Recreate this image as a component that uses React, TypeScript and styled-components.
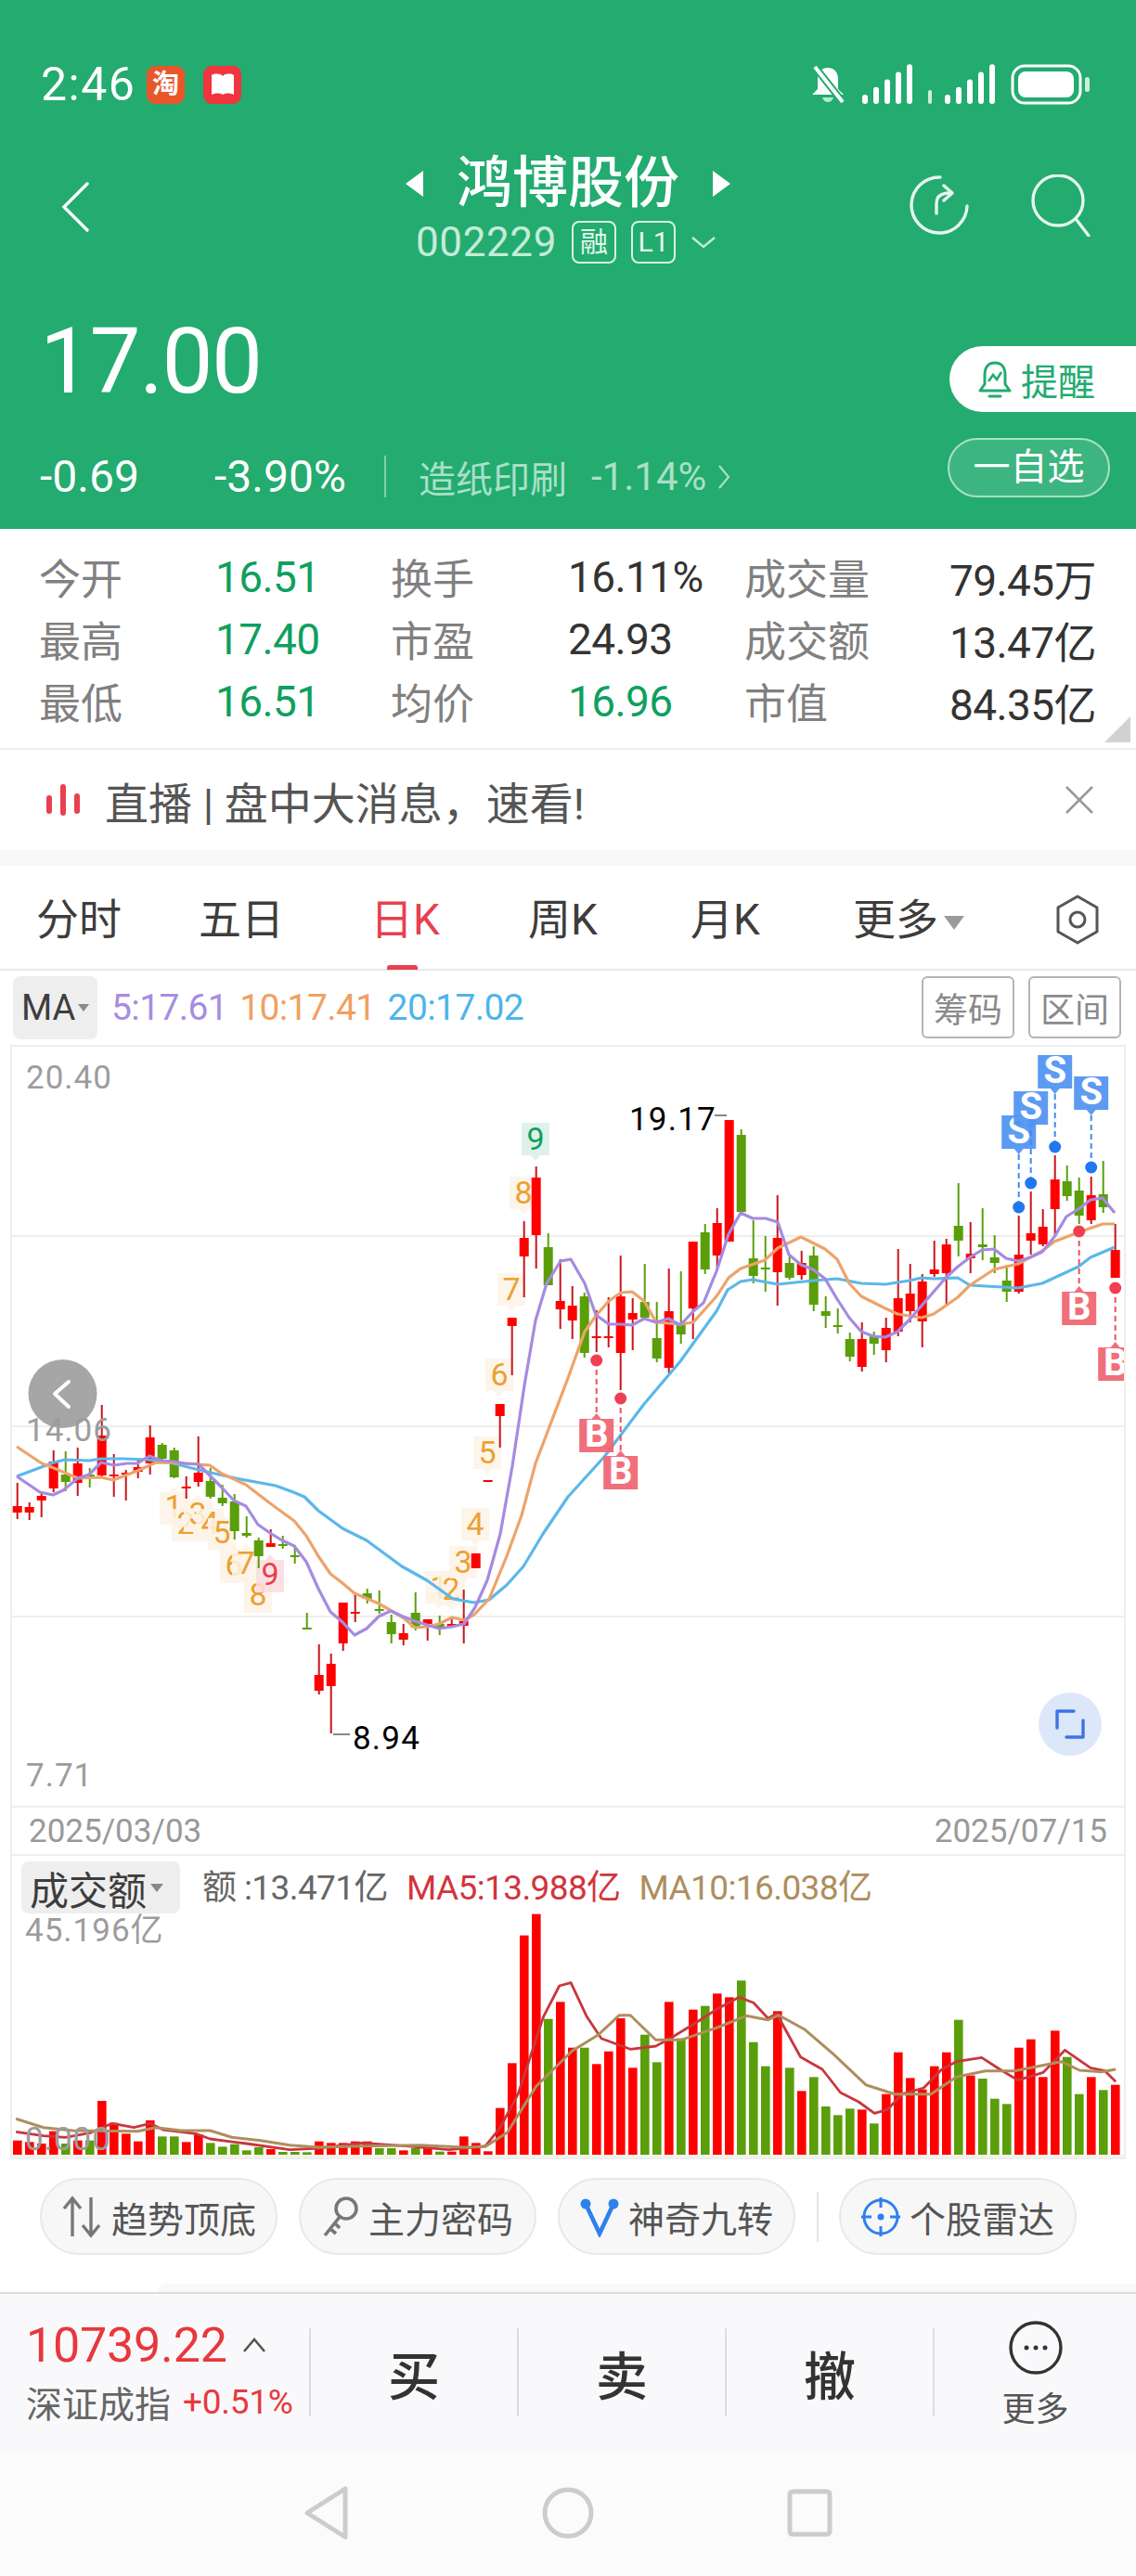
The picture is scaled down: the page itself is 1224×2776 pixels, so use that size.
import React from "react";
import styled, { createGlobalStyle } from "styled-components";

const GREEN = "#23ab70";
const RED = "#e8404f";

const Global = createGlobalStyle`
  html, body { margin: 0; padding: 0; background: #fff; }
  body { font-family: Roboto, "Noto Sans CJK SC", sans-serif; }
`;

const Page = styled.div`
  width: 1224px;
  height: 2776px;
  overflow: hidden;
  display: flex;
  flex-direction: column;
  background: #fff;
`;

/* ---------- green header ---------- */
const Header = styled.header`
  height: 570px;
  flex: none;
  background: ${GREEN};
  color: #fff;
`;
const StatusBar = styled.div`
  display: flex;
  align-items: center;
  justify-content: space-between;
  height: 44px;
  padding: 69px 49px 0 44px;
`;
const StatusLeft = styled.div`
  display: flex;
  align-items: center;
`;
const Time = styled.span`
  font-size: 50px;
  line-height: 44px;
  width: 114px;
  letter-spacing: 1.5px;
`;
const AppIcon = styled.div<{ $bg: string }>`
  width: 41px;
  height: 41px;
  margin-right: 20px;
  border-radius: 9px;
  background: ${(p) => p.$bg};
  display: flex;
  align-items: center;
  justify-content: center;
  font-size: 29px;
  font-weight: 700;
  line-height: 1;
`;
const StatusRight = styled.div`
  display: flex;
  align-items: center;
  gap: 17px;
`;
const NavBar = styled.div`
  display: grid;
  grid-template-columns: 1fr auto 1fr;
  padding: 54px 66px 0 66px;
`;
const BackSlot = styled.div`
  padding-top: 29px;
`;
const NavIcons = styled.div`
  display: flex;
  justify-content: flex-end;
  gap: 64px;
  padding-top: 21px;
  margin-right: -17px;
`;
const TitleBlock = styled.div`
  display: flex;
  flex-direction: column;
  align-items: center;
`;
const TitleRow = styled.div`
  display: flex;
  align-items: center;
  gap: 35px;
  height: 62px;
`;
const Title = styled.h1`
  margin: 0;
  font-size: 60px;
  line-height: 62px;
  font-weight: 500;
`;
const CodeRow = styled.div`
  display: flex;
  align-items: center;
  height: 46px;
  margin-top: 9px;
  margin-left: -4px;
  color: #c4ecd9;
`;
const Code = styled.span`
  font-size: 44px;
  letter-spacing: 0.6px;
  margin-right: 16px;
`;
const CodeBadge = styled.span`
  box-sizing: border-box;
  width: 48px;
  height: 46px;
  margin-right: 16px;
  border: 2px solid #d8f3e6;
  border-radius: 8px;
  display: flex;
  align-items: center;
  justify-content: center;
  font-size: 30px;
  line-height: 1;
  color: #e4f8ee;
`;
const Quote = styled.div`
  display: flex;
  justify-content: space-between;
  padding-top: 56px;
`;
const QuoteLeft = styled.div`
  padding-left: 46px;
`;
const Price = styled.div`
  font-size: 98px;
  line-height: 100px;
  margin-left: -3px;
  letter-spacing: -1.5px;
`;
const ChangeRow = styled.div`
  display: flex;
  align-items: center;
  height: 45px;
  margin-top: 51px;
  font-size: 48px;
`;
const ChangeValue = styled.span<{ $w: number }>`
  width: ${(p) => p.$w}px;
  margin-left: -3px;
`;
const ChangeDivider = styled.span`
  width: 2px;
  height: 45px;
  margin: 0 35px 0 0;
  background: #7fd0ab;
`;
const SectorName = styled.span`
  font-size: 40px;
  color: #a9e0c6;
  margin-right: 26px;
`;
const SectorValue = styled.span`
  font-size: 42px;
  color: #a9e0c6;
  margin-right: 12px;
`;
const QuoteRight = styled.div`
  display: flex;
  flex-direction: column;
  align-items: flex-end;
  padding-top: 33px;
`;
const AlertButton = styled.div`
  box-sizing: border-box;
  width: 201px;
  height: 71px;
  padding-left: 31px;
  gap: 10px;
  display: flex;
  align-items: center;
  background: #fff;
  border-radius: 36px 0 0 36px;
  color: ${GREEN};
  font-size: 40px;
`;
const WatchButton = styled.div`
  box-sizing: border-box;
  width: 175px;
  height: 64px;
  margin: 28px 28px 0 0;
  display: flex;
  align-items: center;
  justify-content: center;
  border: 2px solid #a9e0c6;
  border-radius: 32px;
  background: rgba(255, 255, 255, 0.12);
  font-size: 40px;
  line-height: 1;
`;

/* ---------- stats ---------- */
const Stats = styled.section`
  position: relative;
  height: 238px;
  flex: none;
  box-sizing: border-box;
  padding: 18px 43px 0 42px;
  display: grid;
  grid-template-columns: 190px 189px 191px 190px 190px 1fr;
  grid-auto-rows: 67px;
  align-items: center;
  border-bottom: 2px solid #eee;
`;
const StatLabel = styled.span`
  font-size: 45px;
  color: #808080;
`;
const StatValue = styled.span<{ $green?: boolean; $right?: boolean }>`
  font-size: 46px;
  letter-spacing: -0.6px;
  color: ${(p) => (p.$green ? "#0f9f5f" : "#333")};
  text-align: ${(p) => (p.$right ? "right" : "left")};
  white-space: nowrap;
`;
const Corner = styled.span`
  position: absolute;
  right: 6px;
  bottom: 6px;
  width: 0;
  height: 0;
  border-left: 28px solid transparent;
  border-bottom: 28px solid #d2d2d2;
`;

/* ---------- notice ---------- */
const Notice = styled.div`
  height: 108px;
  flex: none;
  display: flex;
  align-items: center;
  padding: 0 45px 0 50px;
  gap: 27px;
  color: #555;
  font-size: 47px;
`;
const NoticeText = styled.span`
  flex: 1;
`;
const GreyStrip = styled.div`
  height: 17px;
  flex: none;
  background: #f8f8f8;
`;

/* ---------- period tabs ---------- */
const Tabs = styled.nav`
  height: 113px;
  flex: none;
  box-sizing: border-box;
  display: flex;
  align-items: center;
  padding: 5px 39px 0 39px;
  border-bottom: 2px solid #e8e8e8;
`;
const Tab = styled.span<{ $w: number; $active?: boolean }>`
  position: relative;
  width: ${(p) => p.$w}px;
  flex: none;
  font-size: 46px;
  line-height: 60px;
  color: ${(p) => (p.$active ? RED : "#3d3d3d")};
`;
const TabMark = styled.i`
  position: absolute;
  left: 18px;
  top: 79px;
  width: 33px;
  height: 5px;
  border-radius: 3px 3px 0 0;
  background: ${RED};
`;
const Caret = styled.i<{ $s: number; $c: string }>`
  display: inline-block;
  margin-left: ${(p) => p.$s / 2}px;
  vertical-align: middle;
  border-left: ${(p) => p.$s}px solid transparent;
  border-right: ${(p) => p.$s}px solid transparent;
  border-top: ${(p) => p.$s * 1.4}px solid ${(p) => p.$c};
`;
const TabsEnd = styled.div`
  margin-left: auto;
  display: flex;
`;

/* ---------- indicator row ---------- */
const MaRow = styled.div`
  height: 80px;
  flex: none;
  box-sizing: border-box;
  display: flex;
  align-items: flex-start;
  padding: 6px 16px 0 14px;
`;
const Chip = styled.div<{ $w: number; $h: number; $size: number }>`
  box-sizing: border-box;
  width: ${(p) => p.$w}px;
  height: ${(p) => p.$h}px;
  flex: none;
  padding-left: 9px;
  display: flex;
  align-items: center;
  background: #eee;
  border-radius: 8px;
  color: #3d3d3d;
  font-size: ${(p) => p.$size}px;
`;
const MaValues = styled.div`
  flex: 1;
  display: flex;
  gap: 13px;
  height: 68px;
  align-items: center;
  padding-left: 15px;
`;
const Ma = styled.span<{ $c: string }>`
  font-size: 39px;
  letter-spacing: -0.6px;
  color: ${(p) => p.$c};
`;
const OutlineBtn = styled.div`
  box-sizing: border-box;
  width: 100px;
  height: 67px;
  margin-left: 15px;
  display: flex;
  align-items: center;
  justify-content: center;
  border: 2px solid #b4b4b4;
  border-radius: 6px;
  color: #8a8a8a;
  font-size: 37px;
`;

/* ---------- k-line ---------- */
const ChartFrame = styled.div`
  width: 1202px;
  margin-left: 11px;
  box-sizing: border-box;
  flex: none;
  border: 2px solid #eee;
  font-size: 0;
`;
const ChartSvg = styled.svg`
  display: block;
`;
const AxisText = styled.text`
  font-family: Roboto, "Noto Sans CJK SC", sans-serif;
  font-size: 35px;
  letter-spacing: 1px;
  fill: #9c9c9c;
`;
const ExtremeText = styled.text`
  font-family: Roboto, sans-serif;
  font-size: 35px;
  letter-spacing: 1.2px;
  fill: #000;
`;
const TagText = styled.text<{ $bold?: boolean }>`
  font-family: Roboto, sans-serif;
  font-size: ${(p) => (p.$bold ? 40 : 34)}px;
  font-weight: ${(p) => (p.$bold ? 700 : 400)};
  text-anchor: middle;
`;

const DateRow = styled.div`
  width: 1202px;
  height: 52px;
  margin-left: 11px;
  box-sizing: border-box;
  flex: none;
  display: flex;
  align-items: center;
  justify-content: space-between;
  padding: 0 18px;
  border: solid #eee;
  border-width: 0 2px 2px;
  font-size: 35px;
  color: #999;
`;
const Volume = styled.div`
  width: 1202px;
  margin-left: 11px;
  box-sizing: border-box;
  flex: none;
  border: solid #eee;
  border-width: 0 2px 2px;
`;
const VolumeHead = styled.div`
  height: 62px;
  box-sizing: border-box;
  display: flex;
  align-items: flex-start;
  padding: 6px 0 0 10px;
`;
const VolumeValues = styled.div`
  display: flex;
  align-items: center;
  gap: 20px;
  height: 50px;
  padding-left: 24px;
`;
const VolumeValue = styled.span<{ $c: string }>`
  font-size: 37px;
  letter-spacing: -0.6px;
  color: ${(p) => p.$c};
`;

/* ---------- shortcut pills ---------- */
const Pills = styled.div`
  display: flex;
  align-items: center;
  padding: 20px 0 0 43px;
  gap: 23px;
  flex: none;
`;
const Pill = styled.div`
  box-sizing: border-box;
  width: 256px;
  height: 83px;
  display: flex;
  align-items: center;
  justify-content: center;
  gap: 10px;
  background: #f7f7f7;
  border: 2px solid #e8e8e8;
  border-radius: 42px;
  font-size: 39px;
  color: #555;
`;
const PillDivider = styled.span`
  width: 2px;
  height: 54px;
  background: #e4e4e4;
  margin-right: -1px;
`;
const TradeGap = styled.div`
  height: 42px;
  flex: none;
  box-sizing: border-box;
  padding: 31px 0 0 170px;
  border-bottom: 2px solid #ddd;
`;
const FaintPanel = styled.div`
  height: 9px;
  background: #f9f9f9;
  border-radius: 9px 0 0 0;
`;

/* ---------- trade bar ---------- */
const TradeBar = styled.div`
  height: 170px;
  flex: none;
  display: grid;
  grid-template-columns: 333px 224px 224px 224px 219px;
  align-items: start;
  padding-top: 37px;
  box-sizing: border-box;
  background: #f9f9fb;
`;
const IndexBlock = styled.div`
  padding-left: 28px;
`;
const IndexTop = styled.div`
  display: flex;
  align-items: center;
  height: 44px;
  margin-top: -4px;
  font-size: 52px;
  color: #e8383d;
  gap: 16px;
  letter-spacing: -0.2px;
`;
const IndexBottom = styled.div`
  display: flex;
  align-items: center;
  height: 48px;
  margin-top: 15px;
`;
const IndexName = styled.span`
  font-size: 39px;
  color: #666;
  margin-right: 13px;
`;
const IndexPct = styled.span`
  font-size: 37px;
  color: #e8383d;
  letter-spacing: -0.3px;
`;
const TradeCell = styled.div`
  height: 95px;
  box-sizing: border-box;
  display: flex;
  align-items: center;
  justify-content: center;
  border-left: 2px solid #ddd;
  font-size: 56px;
  font-weight: 500;
  color: #333;
`;
const MoreCell = styled.div`
  height: 95px;
  box-sizing: border-box;
  border-left: 2px solid #ddd;
  display: flex;
  flex-direction: column;
  align-items: center;
  font-size: 36px;
  color: #555;
`;
const MoreIcon = styled.svg`
  flex: none;
  margin-top: -8px;
`;
const MoreText = styled.span`
  line-height: 36px;
  margin-top: 20px;
`;
const SystemNav = styled.div`
  flex: 1;
  display: flex;
  justify-content: center;
  gap: 200px;
  padding-top: 36px;
  background: #fbfbfb;
`;

/* ---------- chart data ---------- */
type Candle = [number, number, number, number, "r" | "g"];

const CANDLES: Candle[] = [
  [1598, 1623, 1630, 1637, "r"], [1619, 1624, 1630, 1638, "r"], [1608, 1612, 1617, 1635, "r"], [1563, 1575, 1604, 1608, "r"],
  [1564, 1589, 1597, 1607, "g"], [1560, 1577, 1598, 1612, "r"], [1582, 1589, 1591, 1603, "g"], [1514, 1547, 1590, 1592, "r"],
  [1567, 1589, 1591, 1613, "r"], [1584, 1587, 1589, 1617, "r"], [1573, 1581, 1586, 1593, "r"], [1536, 1549, 1577, 1589, "r"],
  [1555, 1557, 1572, 1573, "g"], [1560, 1563, 1592, 1593, "g"], [1591, 1602, 1604, 1615, "r"], [1548, 1587, 1597, 1602, "r"],
  [1582, 1596, 1613, 1615, "g"], [1600, 1614, 1620, 1623, "g"], [1610, 1618, 1650, 1659, "g"], [1634, 1652, 1655, 1657, "g"],
  [1657, 1660, 1677, 1690, "g"], [1648, 1663, 1667, 1667, "r"], [1655, 1664, 1666, 1669, "g"], [1665, 1676, 1678, 1685, "g"],
  [1738, 1754, 1756, 1756, "g"], [1772, 1805, 1822, 1826, "r"], [1782, 1793, 1817, 1868, "r"], [1727, 1727, 1771, 1779, "r"],
  [1717, 1737, 1739, 1748, "r"], [1712, 1717, 1723, 1728, "g"], [1714, 1734, 1736, 1739, "g"], [1740, 1748, 1761, 1771, "g"],
  [1750, 1760, 1767, 1773, "r"], [1716, 1738, 1754, 1757, "g"], [1745, 1745, 1750, 1768, "r"], [1741, 1750, 1755, 1762, "g"],
  [1743, 1750, 1753, 1753, "r"], [1713, 1747, 1752, 1771, "r"], [1674, 1674, 1690, 1690, "r"], [1595, 1595, 1597, 1597, "r"],
  [1513, 1513, 1526, 1560, "r"], [1420, 1420, 1429, 1482, "r"], [1316, 1334, 1354, 1398, "r"], [1257, 1269, 1331, 1367, "r"],
  [1329, 1344, 1385, 1385, "g"], [1357, 1402, 1411, 1432, "r"], [1386, 1407, 1423, 1443, "r"], [1393, 1397, 1458, 1463, "g"],
  [1412, 1440, 1442, 1457, "r"], [1398, 1440, 1442, 1452, "r"], [1353, 1397, 1458, 1498, "r"], [1399, 1415, 1422, 1455, "r"],
  [1362, 1403, 1420, 1423, "g"], [1403, 1442, 1464, 1468, "g"], [1367, 1413, 1474, 1480, "r"], [1370, 1427, 1438, 1448, "g"],
  [1338, 1338, 1410, 1443, "r"], [1319, 1328, 1368, 1373, "g"], [1302, 1318, 1353, 1368, "r"], [1207, 1207, 1338, 1338, "r"],
  [1217, 1223, 1306, 1306, "g"], [1315, 1356, 1375, 1383, "g"], [1332, 1366, 1368, 1392, "g"], [1288, 1334, 1371, 1407, "r"],
  [1354, 1361, 1377, 1379, "g"], [1348, 1361, 1374, 1379, "r"], [1343, 1353, 1406, 1413, "g"], [1397, 1413, 1418, 1431, "g"],
  [1410, 1428, 1430, 1437, "g"], [1436, 1443, 1462, 1467, "g"], [1425, 1443, 1473, 1478, "r"], [1435, 1440, 1448, 1460, "g"],
  [1420, 1431, 1455, 1468, "r"], [1346, 1399, 1435, 1440, "r"], [1362, 1394, 1413, 1425, "r"], [1373, 1381, 1424, 1452, "r"],
  [1337, 1368, 1373, 1376, "r"], [1335, 1341, 1372, 1407, "r"], [1275, 1321, 1337, 1354, "g"], [1317, 1351, 1356, 1372, "r"],
  [1302, 1341, 1344, 1358, "g"], [1331, 1355, 1361, 1372, "g"], [1363, 1380, 1392, 1403, "g"], [1310, 1352, 1392, 1394, "r"],
  [1284, 1329, 1337, 1352, "r"], [1303, 1322, 1341, 1343, "r"], [1245, 1271, 1303, 1333, "r"], [1256, 1273, 1289, 1294, "g"],
  [1269, 1283, 1310, 1319, "g"], [1268, 1288, 1315, 1319, "r"], [1251, 1287, 1301, 1307, "g"], [1319, 1347, 1377, 1377, "r"],
];

const MA5 =
  "18,1591 43,1608 57,1611 68,1606 84,1593 96,1589 109,1576 123,1579 137,1577 148,1577 161,1569 174,1574 187,1575 199,1577 214,1578 226,1590 239,1603 252,1617 265,1623 278,1643 291,1652 304,1660 317,1666 330,1683 343,1712 356,1737 369,1748 382,1762 395,1755 408,1742 421,1736 434,1742 447,1747 460,1751 473,1755 487,1753 500,1750 512,1732 525,1703 539,1653 552,1580 565,1493 577,1423 589,1383 604,1359 615,1357 630,1383 642,1417 656,1427 669,1427 681,1428 694,1421 707,1425 720,1421 733,1428 747,1413 758,1404 772,1370 785,1330 798,1307 811,1313 825,1313 838,1317 850,1352 863,1363 876,1368 889,1378 902,1400 915,1420 928,1435 941,1440 954,1441 967,1435 980,1422 993,1407 1006,1392 1019,1377 1032,1365 1045,1355 1058,1347 1071,1346 1084,1356 1097,1359 1110,1355 1123,1349 1136,1333 1149,1311 1162,1303 1175,1293 1188,1291 1201,1307";
const MA10 =
  "18,1559 45,1577 58,1582 84,1593 109,1592 122,1595 148,1585 168,1576 199,1577 226,1579 239,1588 265,1600 291,1620 317,1639 330,1655 343,1677 356,1696 369,1706 382,1717 408,1728 434,1743 447,1754 460,1753 473,1750 487,1743 500,1746 511,1740 527,1723 546,1677 562,1633 577,1577 612,1485 630,1435 642,1418 656,1402 669,1393 681,1392 694,1402 707,1425 733,1427 747,1425 772,1397 785,1377 798,1367 824,1358 838,1345 863,1333 889,1346 902,1357 915,1383 928,1397 954,1410 967,1416 993,1420 1006,1416 1032,1398 1045,1385 1071,1368 1097,1362 1123,1348 1136,1338 1162,1328 1188,1319 1201,1319";
const MA20 =
  "18,1591 58,1576 70,1573 96,1574 109,1572 133,1572 160,1573 187,1577 218,1585 254,1593 297,1601 316,1608 328,1613 343,1628 369,1647 395,1660 433,1688 460,1703 488,1723 511,1727 527,1724 546,1708 564,1688 585,1653 612,1613 651,1570 694,1513 733,1467 772,1413 784,1390 798,1381 811,1379 838,1384 876,1380 902,1378 928,1383 954,1384 980,1380 993,1377 1006,1378 1032,1377 1045,1385 1080,1387 1097,1388 1123,1383 1162,1365 1175,1355 1201,1344";

const NINE_UP = [
  { x: 473, y: 1693, n: "1" }, { x: 486, y: 1695, n: "2" }, { x: 499, y: 1666, n: "3" }, { x: 512, y: 1625, n: "4" },
  { x: 525, y: 1548, n: "5" }, { x: 538, y: 1464, n: "6" }, { x: 551, y: 1372, n: "7" }, { x: 564, y: 1268, n: "8" },
];
const NINE_DOWN = [
  { x: 187, y: 1602, n: "1" }, { x: 200, y: 1620, n: "2" }, { x: 213, y: 1610, n: "3" }, { x: 226, y: 1620, n: "4" },
  { x: 239, y: 1630, n: "5" }, { x: 252, y: 1665, n: "6" }, { x: 265, y: 1663, n: "7" }, { x: 278, y: 1697, n: "8" },
];
const SELLS = [
  { x: 1097.7, y: 1202, dot: 1301 }, { x: 1110.7, y: 1176, dot: 1275 }, { x: 1136.7, y: 1137, dot: 1236 }, { x: 1175.7, y: 1160, dot: 1258 },
];
const BUYS = [
  { x: 642.7, y: 1523, dot: 1466 }, { x: 668.7, y: 1563, dot: 1507 }, { x: 1162.7, y: 1386, dot: 1327 }, { x: 1201.7, y: 1446, dot: 1388 },
];

/* tops of the volume bars, read off the picture (3x vertical), colour by sign */
const VOLS: [number, "r" | "g"][] = [
  [1100, "r"], [1105, "r"], [1110, "r"], [1070, "r"], [1110, "g"], [1100, "r"], [1100, "g"], [972, "r"], [1043, "r"], [1078, "r"],
  [1103, "r"], [1035, "r"], [1087, "g"], [1087, "g"], [1105, "r"], [1080, "r"], [1108, "g"], [1120, "g"], [1112, "g"], [1132, "g"],
  [1122, "g"], [1128, "r"], [1137, "g"], [1137, "g"], [1138, "g"], [1103, "r"], [1108, "r"], [1108, "r"], [1103, "r"], [1103, "r"],
  [1125, "g"], [1125, "g"], [1132, "r"], [1125, "g"], [1120, "r"], [1136, "g"], [1136, "r"], [1087, "r"], [1108, "r"], [1135, "r"],
  [995, "r"], [850, "r"], [437, "r"], [368, "r"], [707, "g"], [652, "r"], [800, "r"], [800, "g"], [853, "r"], [812, "r"],
  [705, "r"], [865, "r"], [758, "g"], [847, "g"], [652, "r"], [770, "g"], [677, "r"], [665, "g"], [625, "r"], [637, "r"],
  [583, "g"], [782, "g"], [860, "g"], [682, "r"], [865, "g"], [940, "r"], [895, "g"], [990, "g"], [1018, "g"], [997, "g"],
  [1000, "r"], [1045, "g"], [950, "r"], [815, "r"], [898, "r"], [935, "r"], [860, "r"], [815, "r"], [710, "g"], [890, "r"],
  [900, "g"], [965, "g"], [982, "g"], [800, "r"], [773, "r"], [895, "r"], [745, "r"], [830, "g"], [950, "g"], [895, "r"],
  [937, "g"], [920, "r"],
];
const VOL_MA5: [number, number][] = [
  [22, 1072], [60, 1085], [90, 1090], [125, 1075], [155, 1045], [185, 1058], [207, 1045], [225, 1065], [270, 1078], [290, 1095], [340, 1110], [400, 1130], [440, 1125], [500, 1108], [560, 1118], [620, 1130], [670, 1118], [690, 1060], [715, 950], [750, 700], [772, 600], [788, 590], [810, 700], [830, 770], [870, 805], [905, 795], [925, 770], [960, 720], [990, 675], [1020, 637], [1040, 655], [1060, 705], [1072, 690], [1105, 830], [1135, 870], [1160, 945], [1185, 975], [1207, 1012], [1225, 1000], [1245, 950], [1275, 930], [1300, 870], [1320, 845], [1355, 832], [1380, 870], [1405, 905], [1440, 880], [1470, 808], [1505, 865], [1525, 875], [1540, 910],
];
const VOL_MA10: [number, number][] = [
  [22, 1030], [60, 1058], [100, 1068], [190, 1070], [215, 1058], [250, 1068], [290, 1068], [320, 1090], [360, 1100], [400, 1115], [440, 1122], [500, 1118], [580, 1115], [640, 1122], [670, 1120], [700, 1075], [740, 925], [790, 810], [825, 760], [855, 695], [870, 695], [905, 775], [940, 775], [990, 735], [1030, 697], [1060, 710], [1075, 695], [1110, 740], [1150, 820], [1195, 920], [1235, 950], [1285, 950], [1320, 895], [1360, 875], [1400, 875], [1465, 845], [1490, 873], [1520, 878], [1540, 870],
];
const volPoints = (p: [number, number][]) =>
  p.map(([x, y]) => `${(x / 1.281).toFixed(1)},${(1940 + y / 3).toFixed(1)}`).join(" ");

/* ---------- small drawings ---------- */
const tagPath = (cx: number, y: number, w: number, h: number, up: boolean) => {
  const side = w / 2 - 5;
  return up
    ? `M${cx - w / 2} ${y + h}h${w}v${-(h - 6)}h${-side}l-5-6-5 6h${-side}z`
    : `M${cx - w / 2} ${y}h${w}v${h - 6}h${-side}l-5 6-5-6h${-side}z`;
};

function NineTag(props: { x: number; y: number; n: string; up?: boolean; bg: string; fg: string }) {
  const { x, y, n, up, bg, fg } = props;
  return (
    <g>
      <path d={tagPath(x, y, 30, 41, !!up)} fill={bg} fillOpacity={0.86} />
      <TagText x={x} y={y + (up ? 33 : 29)} fill={fg}>
        {n}
      </TagText>
    </g>
  );
}

function SignalTag(props: { x: number; y: number; n: string; up?: boolean; bg: string }) {
  const { x, y, n, up, bg } = props;
  return (
    <g>
      <path d={tagPath(x, y, 37, 42, !!up)} fill={bg} fillOpacity={0.92} />
      <TagText $bold x={x} y={y + (up ? 36 : 30)} fill="#fff">
        {n}
      </TagText>
    </g>
  );
}

function KLine() {
  return (
    <ChartSvg width="1198" height="818" viewBox="13 1128 1198 818">
      {[1332, 1537, 1742].map((y) => (
        <line key={y} x1="13" x2="1211" y1={y} y2={y} stroke="#eee" strokeWidth="2" />
      ))}
      {NINE_UP.map((t) => (
        <NineTag key={t.x} {...t} bg="#fdf3e7" fg="#eca033" />
      ))}
      {NINE_DOWN.map((t) => (
        <NineTag key={t.x} {...t} up bg="#fdf3e7" fg="#eca033" />
      ))}
      <NineTag x={291} y={1675} n="9" up bg="#fbdcdf" fg="#e8404f" />
      <NineTag x={577} y={1210} n="9" bg="#d9f0e6" fg="#0f9f5f" />
      {CANDLES.map(([wt, bt, bb, wb, c], i) => {
        const x = 18.7 + 13 * i;
        const body = c === "r" ? "#ff0000" : "#5a9e0a";
        const wick = c === "r" ? "#c8141c" : "#5a9e0a";
        return (
          <g key={i}>
            <line x1={x} x2={x} y1={wt} y2={wb} stroke={wick} strokeWidth="2" />
            <rect x={x - 5} y={bt} width="10" height={bb - bt} fill={body} />
          </g>
        );
      })}
      <polyline points={MA20} fill="none" stroke="#5bb8e8" strokeWidth="3.2" strokeLinejoin="round" />
      <polyline points={MA10} fill="none" stroke="#eda36b" strokeWidth="3.2" strokeLinejoin="round" />
      <polyline points={MA5} fill="none" stroke="#a58be0" strokeWidth="3.2" strokeLinejoin="round" />
      {SELLS.map((s) => (
        <g key={s.x}>
          <line x1={s.x} x2={s.x} y1={s.y + 42} y2={s.dot} stroke="#3d8bf0" strokeWidth="2" strokeDasharray="6 4" />
          <circle cx={s.x} cy={s.dot} r="6.5" fill="#1f78f0" />
          <SignalTag x={s.x} y={s.y} n="S" bg="#4f93f2" />
        </g>
      ))}
      {BUYS.map((b) => (
        <g key={b.x}>
          <line x1={b.x} x2={b.x} y1={b.dot} y2={b.y} stroke="#ef4f5f" strokeWidth="2" strokeDasharray="6 4" />
          <circle cx={b.x} cy={b.dot} r="6.5" fill="#ef3f50" />
          <SignalTag x={b.x} y={b.y} n="B" up bg="#f0636f" />
        </g>
      ))}
      <line x1="770" x2="783" y1="1202" y2="1202" stroke="#888" strokeWidth="2" />
      <ExtremeText x="678" y="1218">19.17</ExtremeText>
      <line x1="359" x2="377" y1="1869" y2="1869" stroke="#888" strokeWidth="2" />
      <ExtremeText x="380" y="1885">8.94</ExtremeText>
      <circle cx="67.5" cy="1502" r="37" fill="#a6a6a6" />
      <path d="M74 1489l-15 13 15 14" fill="none" stroke="#fff" strokeWidth="4" strokeLinecap="round" strokeLinejoin="round" />
      <AxisText x="28" y="1173">20.40</AxisText>
      <AxisText x="28" y="1553">14.06</AxisText>
      <AxisText x="28" y="1925">7.71</AxisText>
      <circle cx="1153" cy="1858" r="34" fill="#dde7fa" />
      <path d="M1139 1862v-18h18M1167 1854v18h-18" fill="none" stroke="#3a74e6" strokeWidth="3.4" strokeLinecap="round" strokeLinejoin="round" />
    </ChartSvg>
  );
}

function VolumeChart() {
  return (
    <ChartSvg width="1198" height="263" viewBox="13 2062 1198 263">
      {VOLS.map(([top, c], i) => {
        const y = 1940 + top / 3;
        return <rect key={i} x={14 + 13 * i} y={y} width="9.6" height={2322 - y} fill={c === "r" ? "#ff0000" : "#5a9e0a"} />;
      })}
      <rect x="13" y="2322" width="1198" height="3" fill="#f0f4ea" />
      <polyline points={volPoints(VOL_MA5)} fill="none" stroke="#c8373d" strokeWidth="2.8" strokeLinejoin="round" />
      <polyline points={volPoints(VOL_MA10)} fill="none" stroke="#ae8e5e" strokeWidth="3" strokeLinejoin="round" />
      <AxisText x="27" y="2092">45.196亿</AxisText>
      <AxisText x="27" y="2317">0.000</AxisText>
    </ChartSvg>
  );
}

const Bars = ({ w, low }: { w: number; low?: boolean }) => (
  <svg width={w} height="44" viewBox={`0 0 ${w} 44`}>
    {low && <rect x="0" y="28" width="4" height="15" rx="2" fill="#cdeedd" />}
    {[0, 1, 2, 3, 4].map((i) => {
      const h = 10 + i * 8.2;
      return <rect key={i} x={w - 6 - (4 - i) * 12} y={43 - h} width="6" height={h} rx="3" fill="#fff" />;
    })}
  </svg>
);

export default function App() {
  return (
    <Page>
      <Global />
      <Header>
        <StatusBar>
          <StatusLeft>
            <Time>2:46</Time>
            <AppIcon $bg="#e8562a">淘</AppIcon>
            <AppIcon $bg="#f0353f">
              <svg width="26" height="26" viewBox="0 0 26 26">
                <path d="M1 3c4-2 9-2 12 1 3-3 8-3 12-1v21c-4-2-9-2-12 0-3-2-8-2-12 0z" fill="#fff" />
              </svg>
            </AppIcon>
          </StatusLeft>
          <StatusRight>
            <svg width="40" height="40" viewBox="0 0 40 40">
              <path d="M20 2c-7 0-11 5-11 12v11l-6 6h34l-6-6V14C31 7 27 2 20 2z" fill="#fff" />
              <path d="M14 34h12c-1 3-3 5-6 5s-5-2-6-5z" fill="#b6e6cf" />
              <path d="M6 1l30 38" stroke={GREEN} strokeWidth="8" />
              <path d="M6 1l30 38" stroke="#fff" strokeWidth="4" />
            </svg>
            <Bars w={54} />
            <Bars w={72} low />
            <svg width="86" height="44" viewBox="0 0 86 44">
              <rect x="2" y="2" width="73" height="40" rx="13" fill="none" stroke="#fff" strokeWidth="3" />
              <rect x="8" y="8" width="60" height="28" rx="8" fill="#fff" />
              <rect x="80" y="14" width="5" height="16" rx="2.5" fill="#cdeedd" />
            </svg>
          </StatusRight>
        </StatusBar>
        <NavBar>
          <BackSlot>
            <svg width="30" height="54" viewBox="0 0 30 54">
              <path d="M28 2L3 27l25 25" fill="none" stroke="#fff" strokeWidth="3.4" strokeLinecap="round" />
            </svg>
          </BackSlot>
          <TitleBlock>
            <TitleRow>
              <svg width="21" height="28" viewBox="0 0 21 28">
                <path d="M20 0v28L1 14z" fill="#fff" />
              </svg>
              <Title>鸿博股份</Title>
              <svg width="21" height="28" viewBox="0 0 21 28">
                <path d="M1 0v28l19-14z" fill="#fff" />
              </svg>
            </TitleRow>
            <CodeRow>
              <Code>002229</Code>
              <CodeBadge>融</CodeBadge>
              <CodeBadge>L1</CodeBadge>
              <svg width="28" height="14" viewBox="0 0 28 14">
                <path d="M2 2l12 10L26 2" fill="none" stroke="#c4ecd9" strokeWidth="2.4" />
              </svg>
            </CodeRow>
          </TitleBlock>
          <NavIcons>
            <svg width="66" height="67" viewBox="0 0 66 67">
              <path d="M34 3A30 30 0 1 0 63 34" fill="none" stroke="#e5f6ee" strokeWidth="3.4" strokeLinecap="round" />
              <path d="M30 42V31Q30 20 44 20" fill="none" stroke="#e5f6ee" strokeWidth="3.4" strokeLinecap="round" />
              <path d="M38 12l9 8-9 8" fill="none" stroke="#e5f6ee" strokeWidth="3.4" strokeLinecap="round" strokeLinejoin="round" />
            </svg>
            <svg width="66" height="67" viewBox="0 0 66 67">
              <circle cx="31" cy="28" r="27" fill="none" stroke="#e5f6ee" strokeWidth="3.4" />
              <path d="M51 49l13 17" stroke="#e5f6ee" strokeWidth="3.4" strokeLinecap="round" />
            </svg>
          </NavIcons>
        </NavBar>
        <Quote>
          <QuoteLeft>
            <Price>17.00</Price>
            <ChangeRow>
              <ChangeValue $w={191}>-0.69</ChangeValue>
              <ChangeValue $w={183}>-3.90%</ChangeValue>
              <ChangeDivider />
              <SectorName>造纸印刷</SectorName>
              <SectorValue>-1.14%</SectorValue>
              <svg width="14" height="26" viewBox="0 0 14 26">
                <path d="M2 1l10 12L2 25" fill="none" stroke="#a9e0c6" strokeWidth="2.2" />
              </svg>
            </ChangeRow>
          </QuoteLeft>
          <QuoteRight>
            <AlertButton>
              <svg width="36" height="40" viewBox="0 0 36 40">
                <path d="M18 2C10 2 7 8 7 15v10l-5 7h32l-5-7V15C29 8 26 2 18 2z" fill="none" stroke={GREEN} strokeWidth="3" strokeLinejoin="round" />
                <path d="M12 38h12" stroke={GREEN} strokeWidth="3" strokeLinecap="round" />
                <path d="M11 22l5-7 4 5 5-8" fill="none" stroke={GREEN} strokeWidth="2.6" />
              </svg>
              提醒
            </AlertButton>
            <WatchButton>一自选</WatchButton>
          </QuoteRight>
        </Quote>
      </Header>

      <Stats>
        <StatLabel>今开</StatLabel>
        <StatValue $green>16.51</StatValue>
        <StatLabel>换手</StatLabel>
        <StatValue>16.11%</StatValue>
        <StatLabel>成交量</StatLabel>
        <StatValue $right>79.45万</StatValue>
        <StatLabel>最高</StatLabel>
        <StatValue $green>17.40</StatValue>
        <StatLabel>市盈</StatLabel>
        <StatValue>24.93</StatValue>
        <StatLabel>成交额</StatLabel>
        <StatValue $right>13.47亿</StatValue>
        <StatLabel>最低</StatLabel>
        <StatValue $green>16.51</StatValue>
        <StatLabel>均价</StatLabel>
        <StatValue $green>16.96</StatValue>
        <StatLabel>市值</StatLabel>
        <StatValue $right>84.35亿</StatValue>
        <Corner />
      </Stats>

      <Notice>
        <svg width="36" height="34" viewBox="0 0 36 34">
          <rect x="0" y="12" width="6" height="20" rx="3" fill={RED} />
          <rect x="15" y="0" width="6" height="34" rx="3" fill={RED} />
          <rect x="30" y="10" width="6" height="22" rx="3" fill={RED} />
        </svg>
        <NoticeText>直播 | 盘中大消息，速看!</NoticeText>
        <svg width="32" height="30" viewBox="0 0 32 30">
          <path d="M2 1l28 28M30 1L2 29" stroke="#999" strokeWidth="2.6" />
        </svg>
      </Notice>
      <GreyStrip />

      <Tabs>
        <Tab $w={175}>分时</Tab>
        <Tab $w={185}>五日</Tab>
        <Tab $w={170} $active>
          日K
          <TabMark />
        </Tab>
        <Tab $w={175}>周K</Tab>
        <Tab $w={175}>月K</Tab>
        <Tab $w={130}>
          更多
          <Caret $s={11} $c="#9a9a9a" />
        </Tab>
        <TabsEnd>
          <svg width="48" height="54" viewBox="0 0 48 54">
            <path d="M24 2l21 12v26L24 52 3 40V14z" fill="none" stroke="#555" strokeWidth="3" strokeLinejoin="round" />
            <circle cx="24" cy="27" r="8" fill="none" stroke="#555" strokeWidth="3" />
          </svg>
        </TabsEnd>
      </Tabs>

      <MaRow>
        <Chip $w={91} $h={68} $size={38}>
          MA
          <Caret $s={6} $c="#888" />
        </Chip>
        <MaValues>
          <Ma $c="#a68de0">5:17.61</Ma>
          <Ma $c="#f0a064">10:17.41</Ma>
          <Ma $c="#4db5ea">20:17.02</Ma>
        </MaValues>
        <OutlineBtn>筹码</OutlineBtn>
        <OutlineBtn>区间</OutlineBtn>
      </MaRow>

      <ChartFrame>
        <KLine />
      </ChartFrame>
      <DateRow>
        <span>2025/03/03</span>
        <span>2025/07/15</span>
      </DateRow>
      <Volume>
        <VolumeHead>
          <Chip $w={171} $h={56} $size={42}>
            成交额
            <Caret $s={7} $c="#888" />
          </Chip>
          <VolumeValues>
            <VolumeValue $c="#666">额 :13.471亿</VolumeValue>
            <VolumeValue $c="#d2343c">MA5:13.988亿</VolumeValue>
            <VolumeValue $c="#ae8e5e">MA10:16.038亿</VolumeValue>
          </VolumeValues>
        </VolumeHead>
        <VolumeChart />
      </Volume>

      <Pills>
        <Pill>
          <svg width="44" height="46" viewBox="0 0 44 46">
            <path d="M12 44V4M3 14l9-11 9 11M32 2v40M23 32l9 11 9-11" fill="none" stroke="#777" strokeWidth="3.4" />
          </svg>
          趋势顶底
        </Pill>
        <Pill>
          <svg width="40" height="46" viewBox="0 0 40 46">
            <circle cx="26" cy="14" r="11" fill="none" stroke="#777" strokeWidth="3.6" />
            <path d="M19 23L3 43M9 36l6 5M14 30l5 5" fill="none" stroke="#777" strokeWidth="3.6" />
          </svg>
          主力密码
        </Pill>
        <Pill>
          <svg width="42" height="44" viewBox="0 0 42 44">
            <path d="M6 8l15 32L36 8" fill="none" stroke="#2f80ed" strokeWidth="4.6" />
            <circle cx="6" cy="8" r="5.5" fill="#2f80ed" />
            <circle cx="36" cy="8" r="5.5" fill="#2f80ed" />
          </svg>
          神奇九转
        </Pill>
        <PillDivider />
        <Pill>
          <svg width="42" height="44" viewBox="0 0 42 44">
            <circle cx="21" cy="22" r="18" fill="none" stroke="#2f80ed" strokeWidth="3" />
            <path d="M21 1v11M21 32v11M0 22h11M31 22h11" stroke="#2f80ed" strokeWidth="3" />
            <circle cx="21" cy="22" r="3.5" fill="#2f80ed" />
          </svg>
          个股雷达
        </Pill>
      </Pills>
      <TradeGap>
        <FaintPanel />
      </TradeGap>

      <TradeBar>
        <IndexBlock>
          <IndexTop>
            10739.22
            <svg width="26" height="16" viewBox="0 0 26 16">
              <path d="M2 15L13 2l11 13" fill="none" stroke="#555" strokeWidth="2.6" />
            </svg>
          </IndexTop>
          <IndexBottom>
            <IndexName>深证成指</IndexName>
            <IndexPct>+0.51%</IndexPct>
          </IndexBottom>
        </IndexBlock>
        <TradeCell>买</TradeCell>
        <TradeCell>卖</TradeCell>
        <TradeCell>撤</TradeCell>
        <MoreCell>
          <MoreIcon width="58" height="58" viewBox="0 0 58 58">
            <circle cx="29" cy="29" r="27" fill="none" stroke="#333" strokeWidth="3.4" />
            <circle cx="19" cy="29" r="2.5" fill="#333" />
            <circle cx="29" cy="29" r="2.5" fill="#333" />
            <circle cx="39" cy="29" r="2.5" fill="#333" />
          </MoreIcon>
          <MoreText>更多</MoreText>
        </MoreCell>
      </TradeBar>

      <SystemNav>
        <svg width="60" height="60" viewBox="0 0 60 60">
          <path d="M50 4v52L9 30z" fill="none" stroke="#ccc" strokeWidth="5" strokeLinejoin="round" />
        </svg>
        <svg width="60" height="60" viewBox="0 0 60 60">
          <circle cx="30" cy="30" r="25" fill="none" stroke="#ccc" strokeWidth="5" />
        </svg>
        <svg width="60" height="60" viewBox="0 0 60 60">
          <rect x="9" y="7" width="43" height="46" rx="3" fill="none" stroke="#ccc" strokeWidth="5" />
        </svg>
      </SystemNav>
    </Page>
  );
}
